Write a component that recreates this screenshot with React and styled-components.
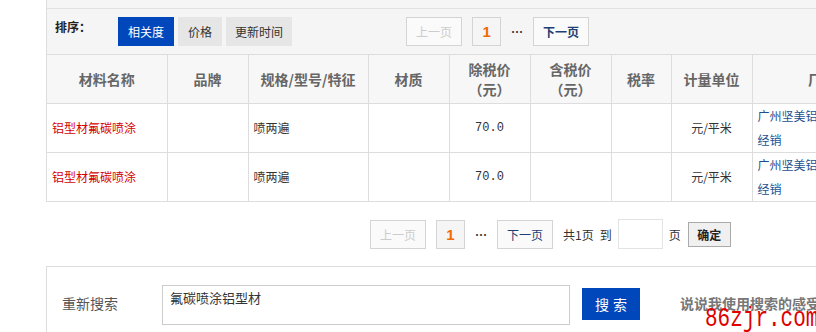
import React from "react";
import styled, { createGlobalStyle } from "styled-components";

const GlobalStyle = createGlobalStyle`
  html, body {
    margin: 0;
    padding: 0;
    background: #fff;
    overflow: hidden;
  }
  body {
    font-family: "Noto Sans CJK SC", "Liberation Sans", sans-serif;
    font-size: 12px;
    color: #333;
  }
`;

const Page = styled.div`
  position: relative;
  width: 816px;
  height: 332px;
  overflow: hidden;
`;

const Box = styled.div`
  margin-left: 46px;
  width: 860px;
  border-left: 1px solid #ddd;
`;

const TopStrip = styled.div`
  height: 8px;
  background: #f5f5f5;
  border-bottom: 1px solid #e2e2e2;
`;

const SortBar = styled.div`
  height: 45px;
  background: #f5f5f5;
  display: flex;
  align-items: flex-start;
  padding: 8px 0 0 8px;
  box-sizing: border-box;
`;

const SortLabel = styled.div`
  font-weight: bold;
  font-size: 12px;
  color: #222;
  width: 63px;
  line-height: 20px;
`;

const SortBtn = styled.div`
  height: 29px;
  line-height: 29px;
  padding: 0 ${(p) => p.$pad || 9}px;
  margin-right: 4px;
  font-size: 12px;
  background: ${(p) => (p.$active ? "#0047bb" : "#e6e6e6")};
  color: ${(p) => (p.$active ? "#fff" : "#333")};
`;

const TopPager = styled.div`
  display: flex;
  align-items: center;
  margin-left: 110px;
`;

const PageBtn = styled.div`
  height: 27px;
  line-height: 27px;
  width: ${(p) => p.$w || 54}px;
  text-align: center;
  border: 1px solid #d4d4d4;
  background: ${(p) => (p.$current ? "#f5f5f5" : "#fafafa")};
  color: ${(p) => (p.$disabled ? "#ccc" : p.$current ? "#f26b00" : "#1d3f73")};
  font-weight: ${(p) => (p.$current || (!p.$disabled && p.$bold) ? "bold" : "normal")};
  font-size: ${(p) => (p.$current ? 15 : 12)}px;
  font-family: ${(p) => (p.$current ? '"Liberation Sans", sans-serif' : "inherit")};
  margin-right: ${(p) => p.$mr || 10}px;
`;

const Dots = styled.div`
  font-weight: bold;
  color: #333;
  width: 12px;
  margin-right: 10px;
  font-size: 12px;
`;

const Table = styled.table`
  border-collapse: collapse;
  table-layout: fixed;
  width: 845px;
`;

const Th = styled.th`
  height: 48px;
  border: 1px solid #ddd;
  border-left: ${(p) => (p.$first ? "none" : "1px solid #ddd")};
  background: #f7f7f7;
  color: #666;
  font-size: 14px;
  font-weight: bold;
  line-height: 20px;
  text-align: center;
  padding: 0;
`;

const Td = styled.td`
  height: 48px;
  border: 1px solid #ddd;
  border-left: ${(p) => (p.$first ? "none" : "1px solid #ddd")};
  background: #fff;
  font-size: 12px;
  line-height: 24px;
  padding: 0 5px;
  text-align: ${(p) => p.$align || "left"};
  color: ${(p) => p.$color || "#333"};
  font-family: ${(p) => (p.$num ? '"Liberation Mono", monospace' : "inherit")};
`;

const BelowWrap = styled.div`
  margin-left: 46px;
  width: 860px;
`;

const BottomPager = styled.div`
  height: 65px;
  display: flex;
  align-items: center;
  padding: 1px 0 0 324px;
  border-bottom: 1px solid #ddd;
  box-sizing: border-box;
`;

const PagerText = styled.span`
  font-size: 12px;
  color: #333;
  margin-right: ${(p) => p.$mr || 6}px;
`;

const JumpInput = styled.input`
  width: 45px;
  height: 30px;
  border: 1px solid #e3e3e3;
  box-sizing: border-box;
  margin: -2px 6px 0 0;
  outline: none;
`;

const OkBtn = styled.button`
  width: 43px;
  height: 25px;
  border: 1px solid #aaa;
  background: #f0f0f0;
  font-family: inherit;
  font-size: 12px;
  font-weight: bold;
  color: #222;
  padding: 0;
`;

const SearchBox = styled.div`
  border-left: 1px solid #ddd;
`;

const SearchSection = styled.div`
  display: flex;
  align-items: flex-start;
  padding: 18px 0 0 15px;
  height: 66px;
  box-sizing: border-box;
`;

const SearchLabel = styled.div`
  font-size: 14px;
  color: #555;
  width: 100px;
  line-height: 36px;
`;

const SearchInput = styled.div`
  width: 408px;
  height: 40px;
  border: 1px solid #ccc;
  box-sizing: border-box;
  padding: 3px 7px;
  font-size: 13px;
  color: #333;
  line-height: 18px;
`;

const SearchBtn = styled.div`
  width: 58px;
  height: 32px;
  line-height: 32px;
  margin: 3px 0 0 12px;
  background: #0047bb;
  color: #fff;
  text-align: center;
  font-size: 14px;
  letter-spacing: 4px;
  text-indent: 4px;
`;

const Feedback = styled.div`
  margin-left: 40px;
  font-size: 14px;
  font-weight: bold;
  color: #777;
  line-height: 36px;
  white-space: nowrap;
`;

const Watermark = styled.div`
  position: absolute;
  left: 705px;
  top: 308px;
  font-family: "Liberation Mono", monospace;
  font-size: 21px;
  line-height: 18px;
  color: #e00000;
  transform: scaleY(1.3);
  transform-origin: top left;
  white-space: nowrap;
`;

const columns = [
  { title: "材料名称", w: 120 },
  { title: "品牌", w: 81 },
  { title: "规格/型号/特征", w: 120 },
  { title: "材质", w: 81 },
  { title: ["除税价", "（元）"], w: 81 },
  { title: ["含税价", "（元）"], w: 81 },
  { title: "税率", w: 60 },
  { title: "计量单位", w: 81 },
  { title: "厂商", w: 140 },
];

const rows = [
  { name: "铝型材氟碳喷涂", spec: "喷两遍", price: "70.0", unit: "元/平米", vendor: ["广州坚美铝型材", "经销"] },
  { name: "铝型材氟碳喷涂", spec: "喷两遍", price: "70.0", unit: "元/平米", vendor: ["广州坚美铝型材", "经销"] },
];

const Pager = ({ compact }) => (
  <>
    <PageBtn $disabled>上一页</PageBtn>
    <PageBtn $current $w={27}>1</PageBtn>
    <Dots>…</Dots>
    <PageBtn $bold={compact}>下一页</PageBtn>
  </>
);

const App = () => {
  return (
    <Page>
      <GlobalStyle />
      <Box>
        <TopStrip />
        <SortBar>
          <SortLabel>排序：</SortLabel>
          <SortBtn $active $pad={10}>相关度</SortBtn>
          <SortBtn $pad={10}>价格</SortBtn>
          <SortBtn $pad={9}>更新时间</SortBtn>
          <TopPager>
            <Pager compact />
          </TopPager>
        </SortBar>
        <Table>
          <colgroup>
            {columns.map((c, i) => (
              <col key={i} style={{ width: c.w }} />
            ))}
          </colgroup>
          <thead>
            <tr>
              {columns.map((c, i) => (
                <Th key={i} $first={i === 0}>
                  {Array.isArray(c.title) ? (
                    <>
                      {c.title[0]}
                      <br />
                      {c.title[1]}
                    </>
                  ) : (
                    c.title
                  )}
                </Th>
              ))}
            </tr>
          </thead>
          <tbody>
            {rows.map((r, i) => (
              <tr key={i}>
                <Td $first $color="#d40000">{r.name}</Td>
                <Td />
                <Td>{r.spec}</Td>
                <Td />
                <Td $align="center" $num>{r.price}</Td>
                <Td />
                <Td />
                <Td $align="center">{r.unit}</Td>
                <Td $color="#1d4f8f">
                  {r.vendor[0]}
                  <br />
                  {r.vendor[1]}
                </Td>
              </tr>
            ))}
          </tbody>
        </Table>
      </Box>
      <BelowWrap>
        <BottomPager>
          <Pager />
          <PagerText>共1页</PagerText>
          <PagerText>到</PagerText>
          <JumpInput />
          <PagerText $mr={7}>页</PagerText>
          <OkBtn>确定</OkBtn>
        </BottomPager>
        <SearchBox>
          <SearchSection>
            <SearchLabel>重新搜索</SearchLabel>
            <SearchInput>氟碳喷涂铝型材</SearchInput>
            <SearchBtn>搜索</SearchBtn>
            <Feedback>说说我使用搜索的感受</Feedback>
          </SearchSection>
        </SearchBox>
      </BelowWrap>
      <Watermark>86zjr.com</Watermark>
    </Page>
  );
};

export default App;
